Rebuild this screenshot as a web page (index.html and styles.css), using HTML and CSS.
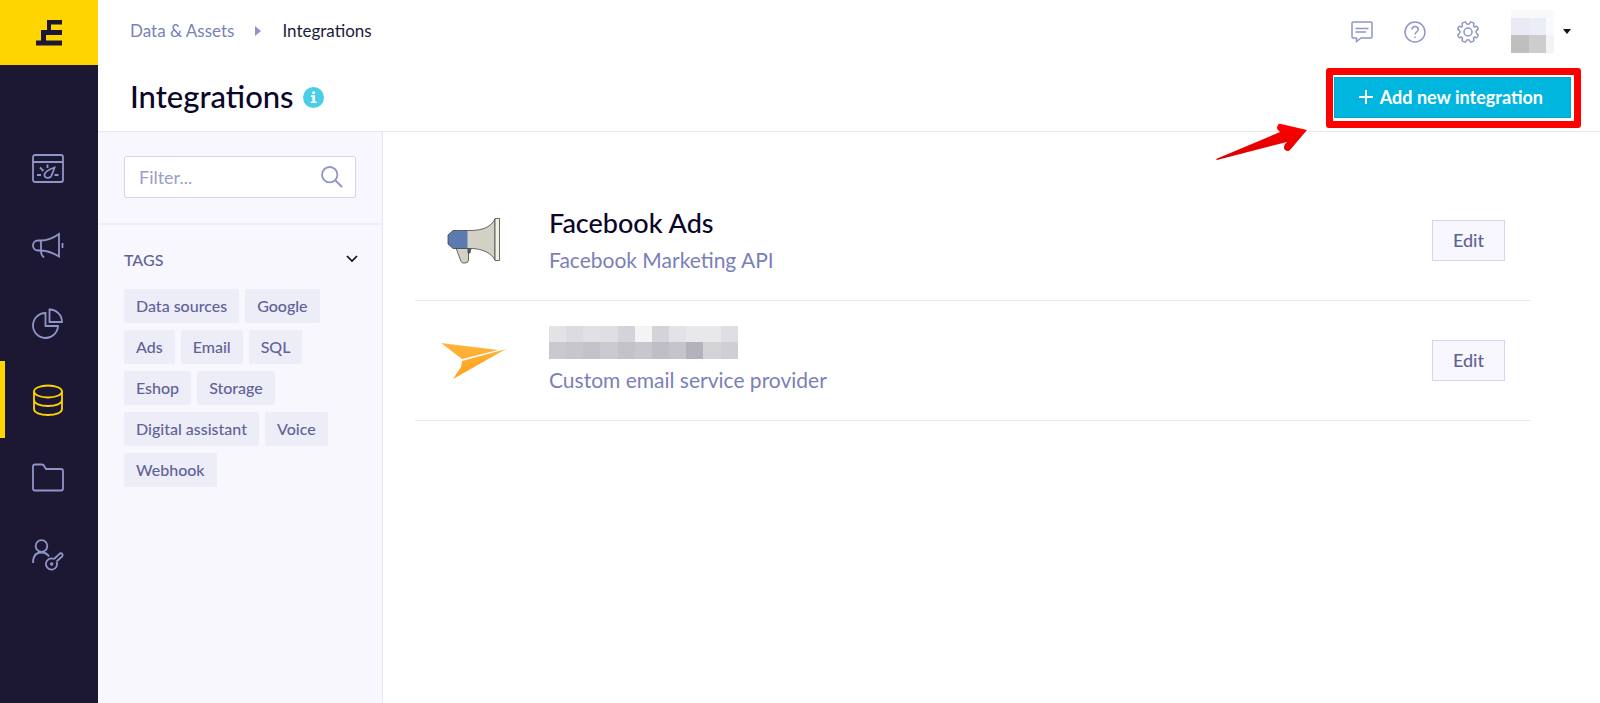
FILE: index.html
```html
<!DOCTYPE html>
<html lang="en">
<head>
<meta charset="utf-8">
<meta name="viewport" content="width=device-width, initial-scale=1">
<title>Integrations</title>
<link rel="stylesheet" href="styles.css">
</head>
<body>
<div class="app">
  <aside class="sidebar">
    <a class="logo" href="#" aria-label="Home">
      <svg width="26" height="26" viewBox="0 0 26 26" fill="currentColor"><path d="M11 0H26V4.500H15V10H26V15H10V20.500H26V25.500H0V20.500H5V10H11Z"/></svg>
    </a>
    <nav class="nav" aria-label="Main">
      <a class="nav-item" href="#" aria-label="Dashboards"><svg class="icon" viewBox="0 0 32 32"><rect x="1" y="2" width="30" height="27" rx="2"/><path d="M1 9h30M5 22h4M22.500 22h4M8 14.500l3.500 3.500M15.500 11.500v3.500M22.500 14.500C17 16.500 13 18.500 12.500 21.500C12 25.500 18 26 19.500 22.500C20.500 20 21.500 18 22.500 14.500Z"/></svg></a>
      <a class="nav-item" href="#" aria-label="Campaigns"><svg class="icon" viewBox="0 0 32 32"><path d="M9 10.500H6a5 5 0 0 0 0 10H9C16 20.500 22 23.500 27 26.500V4C22 7.500 16 10.500 9 10.500ZM9 10.500v10.500C9 24 10 26 12 27.500M30.500 13v5"/></svg></a>
      <a class="nav-item" href="#" aria-label="Analyses"><svg class="icon" viewBox="0 0 32 32"><path d="M13.500 6A12.500 12.500 0 1 0 26 19H13.500ZM17.500 2.500A12.500 12.500 0 0 1 30 15H17.500Z"/></svg></a>
      <a class="nav-item active" href="#" aria-label="Data and assets" aria-current="page"><svg class="icon" viewBox="0 0 32 32"><ellipse cx="16" cy="7.500" rx="14" ry="6"/><path d="M2 7.500V25c0 3.500 6 6 14 6s14-2.500 14-6V7.500M2 16c0 3.500 6 6 14 6s14-2.500 14-6"/></svg></a>
      <a class="nav-item" href="#" aria-label="Files"><svg class="icon" viewBox="0 0 32 32"><path d="M3 3.500H10Q11.500 3.500 12.500 5.500L14 8H29Q31 8 31 10V27.500Q31 29.500 29 29.500H3Q1 29.500 1 27.500V5.500Q1 3.500 3 3.500Z"/></svg></a>
      <a class="nav-item" href="#" aria-label="Access"><svg class="icon" viewBox="0 0 32 32"><circle cx="9.500" cy="8" r="5.800"/><path d="M1 25C1 18.500 4 14.500 9.500 14.500C13 14.500 15.500 16 17 18.500M22 21L27.500 15.800Q29 14.500 30.300 16Q31.300 17.400 30 18.600L24.500 23.500M22 21a5.600 5.600 0 1 0 2.500 2.500"/><circle cx="19.700" cy="26" r=".8"/></svg></a>
    </nav>
  </aside>

  <div class="page">
    <header class="header">
      <div class="topbar">
        <nav class="breadcrumb" aria-label="Breadcrumb">
          <a href="#">Data &amp; Assets</a>
          <svg width="6" height="10" viewBox="0 0 6 10"><path d="M0 0L6 5L0 10Z" fill="#9095c8"/></svg>
          <span>Integrations</span>
        </nav>
        <div class="tools">
          <button class="tool" type="button" aria-label="Messages"><svg viewBox="0 0 22 22"><path d="M2 1H20Q21 1 21 2V16Q21 17 20 17H10L5.500 20.500V17H2Q1 17 1 16V2Q1 1 2 1ZM4.500 7.500H17.500M4.500 11H15"/></svg></button>
          <button class="tool" type="button" aria-label="Help"><svg viewBox="0 0 22 22"><circle cx="11" cy="11" r="10"/><path d="M8 8.500C8 4.500 14.200 4.500 14.200 8.500C14.200 11 11 11 11 13.500M11 15.500v1.500"/></svg></button>
          <button class="tool" type="button" aria-label="Settings"><svg viewBox="0 0 22 22"><circle cx="11" cy="11" r="4"/><path d="M11 3.200Q12.600 3.200 13 1.800Q13.400 .6 14.600 1.100L16.300 1.900Q17.300 2.400 16.800 3.600Q16.200 5 17 5.600Q17.600 6.200 18.800 5.500Q19.900 5 20.400 6L21 7.400Q21.400 8.500 20.300 9Q19 9.600 19 11Q19 12.400 20.300 13Q21.400 13.500 21 14.600L20.400 16Q19.900 17 18.800 16.500Q17.600 15.800 17 16.400Q16.200 17 16.800 18.400Q17.300 19.600 16.300 20.100L14.600 20.900Q13.400 21.400 13 20.200Q12.600 18.800 11 18.800Q9.400 18.800 9 20.200Q8.600 21.400 7.400 20.900L5.700 20.100Q4.700 19.600 5.200 18.400Q5.800 17 5 16.400Q4.400 15.800 3.200 16.500Q2.100 17 1.600 16L1 14.600Q.6 13.500 1.700 13Q3 12.400 3 11Q3 9.600 1.700 9Q.6 8.500 1 7.400L1.600 6Q2.100 5 3.200 5.500Q4.400 6.200 5 5.600Q5.800 5 5.200 3.600Q4.700 2.400 5.700 1.900L7.400 1.100Q8.600 .6 9 1.800Q9.400 3.200 11 3.200Z"/></svg></button>
          <button class="account" type="button" aria-label="Account">
            <svg width="44" height="44" viewBox="0 0 44 44" shape-rendering="crispEdges"><path fill="#f9f9fb" d="M0 0h43v8H0z"/><path fill="#eaeaf4" d="M0 8h18v17H0z"/><path fill="#eceef7" d="M18 8h17v17H18z"/><path fill="#fafafc" d="M35 8h8v17h-8z"/><path fill="#bfbfbf" d="M0 25h18v18H0z"/><path fill="#cdcdcd" d="M18 25h17v18H18z"/><path fill="#f3f3f3" d="M35 25h8v18h-8z"/></svg>
            <svg width="8" height="5" viewBox="0 0 8 5"><path d="M0 0H8L4 5Z" fill="#111"/></svg>
          </button>
        </div>
      </div>
      <div class="titlebar">
        <h1>Integrations</h1>
        <button class="info" type="button" aria-label="About integrations"><svg width="21" height="21" viewBox="0 0 21 21"><circle cx="10.500" cy="10.500" r="10.500" fill="#4acde6"/><path fill="#fff" d="M9.300 4.500h2.700v2.500H9.300zM8 8.300h4.100v6.200h1.500v1.600H7.800v-1.600h1.600V9.900H8z"/></svg></button>
        <div class="callout">
          <button class="add" type="button"><svg width="14" height="14" viewBox="0 0 14 14"><path d="M7 0v14M0 7h14" stroke="#fff" stroke-width="2"/></svg>Add new integration</button>
          <svg class="arrow" width="94" height="40" viewBox="0 0 94 40"><defs><linearGradient id="red" x1="0" y1="0" x2="0" y2="1"><stop offset="0" stop-color="#f00"/><stop offset="1" stop-color="#d90000"/></linearGradient></defs><path fill="url(#red)" d="M1 36L65 9L63 7Q61 5 63 2Q64 0 66 1L92 7L75 27Q73 29 70 27Q68 25 70 21L72 19L2 37Z"/></svg>
        </div>
      </div>
    </header>

    <div class="body">
      <section class="filters" aria-label="Filters">
        <div class="search">
          <div class="field">
            <input type="text" placeholder="Filter..." aria-label="Filter">
            <svg width="22" height="22" viewBox="0 0 22 22" fill="none" stroke="#9095c8" stroke-width="1.800"><circle cx="8.700" cy="8.700" r="7.700"/><path d="M14 14L21 21"/></svg>
          </div>
        </div>
        <div class="tags">
          <button class="tags-head" type="button" aria-expanded="true">TAGS<svg width="12" height="8" viewBox="0 0 12 8"><path d="M1 1L6 6L11 1" fill="none" stroke="#111" stroke-width="1.700"/></svg></button>
          <div class="tag-list">
            <button class="tag" type="button">Data sources</button>
            <button class="tag" type="button">Google</button>
            <button class="tag" type="button">Ads</button>
            <button class="tag" type="button">Email</button>
            <button class="tag" type="button">SQL</button>
            <button class="tag" type="button">Eshop</button>
            <button class="tag" type="button">Storage</button>
            <button class="tag" type="button">Digital assistant</button>
            <button class="tag" type="button">Voice</button>
            <button class="tag" type="button">Webhook</button>
          </div>
        </div>
      </section>

      <main class="list">
        <article class="row">
          <svg class="brand" width="66" height="48" viewBox="0 0 66 48"><g stroke="#444" stroke-width=".8"><path fill="#d3d1c5" d="M16 31L21 44.500Q22 46.500 25 46Q28.500 46 28.500 43V31Z"/><path fill="#3b5b92" d="M28 31h3l-1 5h-2z"/><path fill="#d3d1c5" d="M26 13.500H32C43 13 51 10 55 2V43C51 36 43 32 32 31.500H26Z"/><path fill="#5a7ab0" d="M26 13.500H13L8 18V27L13 31.500H26"/><path fill="#f3f1df" d="M55 1.500h4.500V43.500H55z"/></g><path d="M25 14h2.500v17H25z" fill="#5a7ab0"/></svg>
          <div class="info-text">
            <h2>Facebook Ads</h2>
            <p>Facebook Marketing API</p>
          </div>
          <button class="edit" type="button">Edit</button>
        </article>
        <article class="row">
          <svg class="brand" width="66" height="48" viewBox="0 0 66 48"><defs><linearGradient id="sun" x1="0" y1="0" x2="0" y2="1"><stop offset="0" stop-color="#ffb53d"/><stop offset="1" stop-color="#ffa01c"/></linearGradient></defs><path fill="url(#sun)" d="M1 6L58 13L22 22ZM66 12L13 42L21 30L22 24Z"/></svg>
          <div class="info-text">
            <svg class="redacted" role="img" aria-label="Hidden name" width="189" height="33" viewBox="0 0 189 33" shape-rendering="crispEdges">
              <path fill="#e3e3e5" d="M0 0h17v16H0z"/><path fill="#dbdbe0" d="M17 0h17v16H17z"/><path fill="#e0e0e5" d="M34 0h17v16H34z"/><path fill="#dfdfe1" d="M51 0h18v16H51z"/><path fill="#d4d3d9" d="M69 0h17v16H69z"/><path fill="#f4f4f4" d="M86 0h17v16H86z"/><path fill="#d4d3d9" d="M103 0h17v16h-17z"/><path fill="#e2e2e7" d="M120 0h17v16h-17z"/><path fill="#e8e8ea" d="M137 0h35v16h-35z"/><path fill="#dedee3" d="M172 0h17v16h-17z"/>
              <path fill="#cac9d0" d="M0 16h17v17H0z"/><path fill="#c7c6cd" d="M17 16h17v17H17z"/><path fill="#c3c2c9" d="M34 16h17v17H34z"/><path fill="#cbcad0" d="M51 16h18v17H51z"/><path fill="#c3c2c9" d="M69 16h17v17H69z"/><path fill="#c8c7cd" d="M86 16h17v17H86z"/><path fill="#bfbec6" d="M103 16h17v17h-17z"/><path fill="#c5c4cb" d="M120 16h17v17h-17z"/><path fill="#b3b1bc" d="M137 16h17v17h-17z"/><path fill="#d4d3d8" d="M154 16h18v17h-18z"/><path fill="#cfced5" d="M172 16h17v17h-17z"/>
            </svg>
            <p>Custom email service provider</p>
          </div>
          <button class="edit" type="button">Edit</button>
        </article>
      </main>
    </div>
  </div>
</div>
</body>
</html>
```

FILE: styles.css
```css
* { box-sizing: border-box; }
body { margin: 0; font-family: Lato, "Liberation Sans", sans-serif; color: #0b0629; background: #fff; }
button { font: inherit; color: inherit; background: none; border: 0; padding: 0; cursor: pointer; }
a { color: inherit; text-decoration: none; }
h1, h2, p { margin: 0; font-weight: 500; }
h1, h2, .edit, .tag, .tags-head { font-family: "Lato Medium", Lato, "Liberation Sans", sans-serif; }
svg { display: block; flex: none; }

.app { display: flex; min-height: 100vh; }

.sidebar { flex: none; width: 98px; background: #1c1733; }
.logo { display: flex; align-items: center; justify-content: center; height: 65px; color: #1c1733; background: #ffd500; }
.nav { display: flex; flex-direction: column; padding-top: 65px; }
.nav-item { display: flex; align-items: center; height: 77px; padding-left: 27px; border-left: 5px solid transparent; color: #9095c8; }
.nav-item.active { border-left-color: #ffd500; color: #ffd500; }
.icon { width: 32px; height: 32px; overflow: visible; fill: none; stroke: currentColor; stroke-width: 1.8; }

.page { flex: 1; display: flex; flex-direction: column; min-width: 0; }
.header { border-bottom: 1px solid #e8e8f5; }
.topbar { display: flex; align-items: center; justify-content: space-between; height: 62px; padding: 0 29px 0 32px; }
.breadcrumb { display: flex; align-items: center; gap: 21px; font-size: 17px; line-height: 24px; color: #1c1b3d; }
.breadcrumb a { color: #7b7fb8; }
.tools { display: flex; align-items: center; gap: 31px; padding-top: 1px; }
.tool svg { width: 22px; height: 22px; fill: none; stroke: #9095c8; stroke-width: 1.5; }
.account { display: flex; align-items: center; gap: 8px; padding-left: 1px; }

.titlebar { display: flex; align-items: center; gap: 9px; height: 69px; padding: 1px 29px 0 32px; }
h1 { font-size: 31px; line-height: 40px; padding-bottom: 2px; }
.callout { position: relative; margin-left: auto; }
.callout::after { content: ""; position: absolute; inset: -9px -10px -10px -8px; border: 7px solid #f00; border-radius: 3px; pointer-events: none; }
.add { display: flex; align-items: center; gap: 7px; height: 41px; padding: 0 27px 0 24px; background: #00b6de; border: 1px solid #00a5cc; color: #fff; font-size: 18px; font-weight: 700; }
.arrow { position: absolute; right: 262px; top: 46px; pointer-events: none; }

.body { flex: 1; display: flex; }
.filters { flex: none; width: 285px; background: #f7f7fd; border-right: 1px solid #e6e6f4; }
.search { padding: 24px 26px 25px; border-bottom: 2px solid #ededf7; }
.field { display: flex; align-items: center; height: 42px; padding: 0 12px 0 14px; background: #fff; border: 1px solid #cfd8f0; border-radius: 2px; }
.field input { flex: 1; min-width: 0; padding: 0; border: 0; outline: 0; background: none; font: inherit; font-size: 18px; color: #0b0629; }
.field input::placeholder { color: #9a9ecb; opacity: 1; }
.tags { padding: 24px 24px 24px 26px; }
.tags-head { display: flex; align-items: center; justify-content: space-between; width: 100%; height: 20px; font-size: 16px; font-weight: 500; color: #5f6299; }
.tag-list { display: flex; flex-wrap: wrap; gap: 7px 6px; padding-top: 20px; }
.tag { height: 34px; padding: 0 12px 2px; border-radius: 2px; background: #ededf7; color: #5f6299; font-size: 16px; font-weight: 500; }

.list { flex: 1; min-width: 0; padding: 49px 70px 50px 32px; }
.row { display: flex; align-items: center; height: 120px; padding: 0 25px; border-bottom: 1px solid #e6e6f4; }
.info-text { flex: 1; margin-left: 43px; padding-top: 2px; }
h2 { font-size: 27px; line-height: 36px; }
.info-text p { font-size: 21px; line-height: 38px; font-weight: 400; color: #7b7fb8; }
.redacted { margin: 2px 0; }
.edit { height: 41px; padding: 0 20px 2px; border: 1px solid #cfd8f0; background: #f7f7fd; color: #5f6299; font-size: 18px; font-weight: 500; }
```
